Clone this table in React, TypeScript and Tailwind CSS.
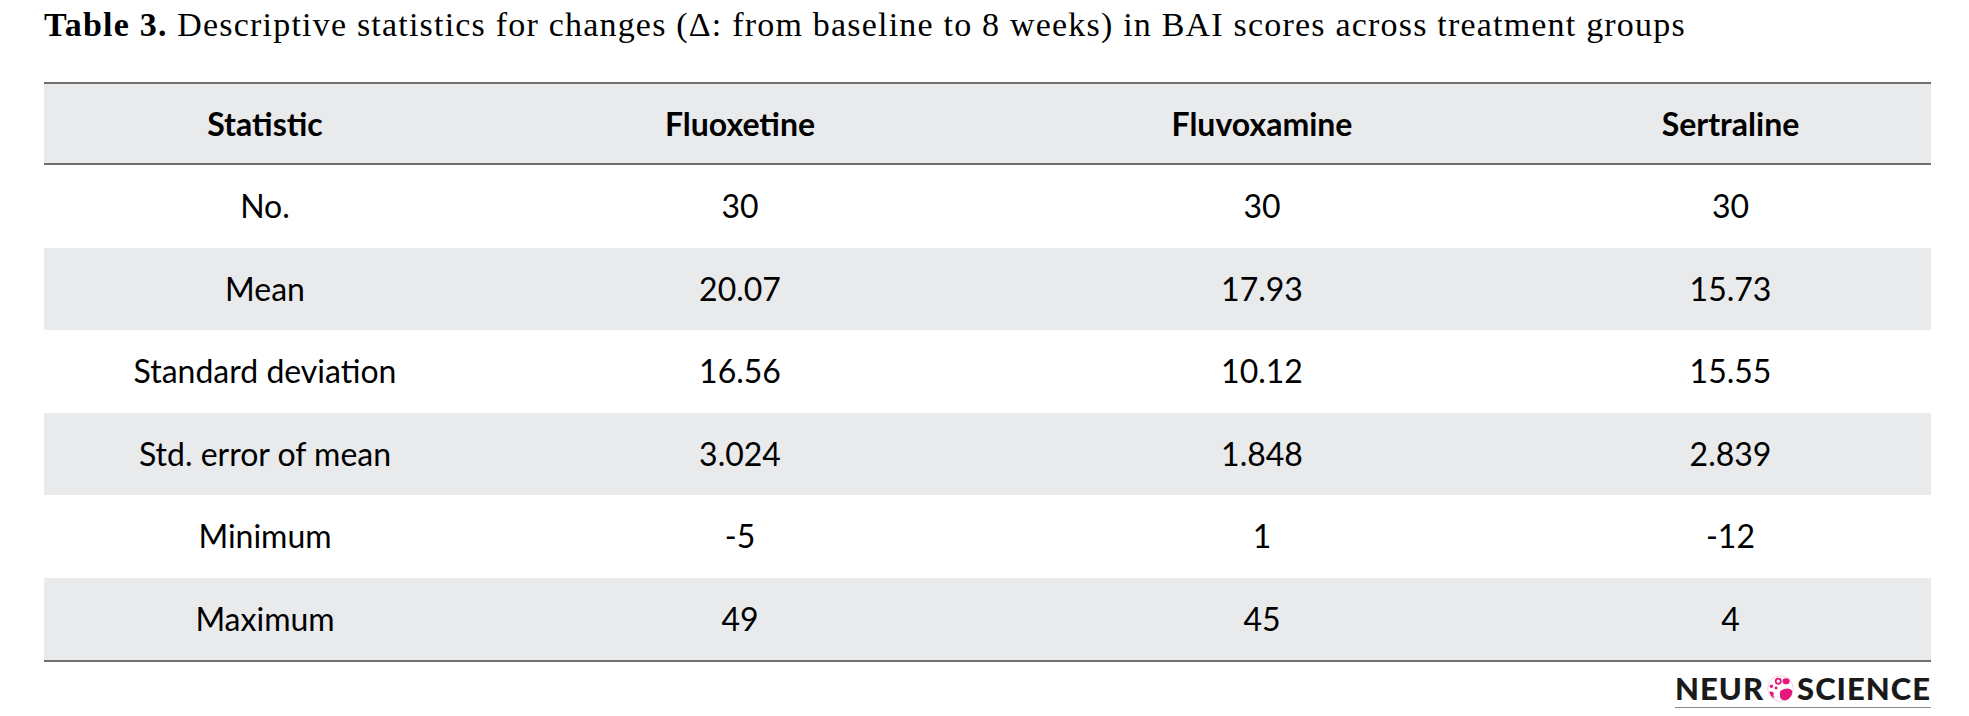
import React from "react";

const rows = [
  ["No.", "30", "30", "30"],
  ["Mean", "20.07", "17.93", "15.73"],
  ["Standard deviation", "16.56", "10.12", "15.55"],
  ["Std. error of mean", "3.024", "1.848", "2.839"],
  ["Minimum", "-5", "1", "-12"],
  ["Maximum", "49", "45", "4"],
];

function BrainIcon() {
  return (
    <svg width="29" height="29" viewBox="0 0 26 26" className="mx-[2px]">
      <circle cx="13" cy="13" r="11.5" fill="none" stroke="#f4c6dc" strokeWidth="0.8" />
      <circle cx="11" cy="6.5" r="2.3" fill="none" stroke="#e5177b" strokeWidth="1.6" />
      <ellipse cx="18" cy="6.5" rx="3.2" ry="2.8" fill="#e5177b" />
      <circle cx="4.8" cy="11" r="1.5" fill="#e5177b" />
      <circle cx="9" cy="12.5" r="1.3" fill="#e5177b" />
      <path d="M13 15 Q20 11 23.5 15 Q24 21 18 23.5 Q13 24 12.5 20 Q12 17 13 15 Z" fill="#e5177b" />
      <path d="M3 16 Q5 15 7 17 Q6 20 8 22 Q4 21 3 16 Z" fill="#e5177b" />
    </svg>
  );
}

export default function App() {
  return (
    <div className="w-[1969px] h-[716px] bg-white relative overflow-hidden">
      <div
        className="pl-[44px] pt-[5px] h-[82px] text-[34px] leading-[40px] tracking-[1.2px] text-black whitespace-nowrap"
        style={{ fontFamily: '"Liberation Serif", serif' }}
      >
        <span className="font-bold">Table 3.</span> Descriptive statistics for changes (Δ: from baseline to 8 weeks) in BAI scores across treatment groups
      </div>
      <div className="ml-[44px] w-[1887px] border-t-2 border-b-2 border-[#6f6f6f] text-black" style={{ fontFamily: "Lato, sans-serif" }}>
        <div className="grid grid-cols-[442px_508px_536px_401px] h-[81px] bg-[#e9eaec] border-b-2 border-[#6f6f6f] items-center text-center text-[32px] font-bold">
          <div>Statistic</div>
          <div>Fluoxetine</div>
          <div>Fluvoxamine</div>
          <div>Sertraline</div>
        </div>
        {rows.map((r, i) => (
          <div
            key={i}
            className={`grid grid-cols-[442px_508px_536px_401px] h-[82.5px] items-center text-center text-[32px] ${i % 2 === 1 ? "bg-[#e9eaec]" : "bg-white"}`}
          >
            {r.map((c, j) => (
              <div key={j}>{c}</div>
            ))}
          </div>
        ))}
      </div>
      <div className="flex justify-end pr-[38px] pt-[11px]">
        <div className="flex flex-col items-end">
          <div
            className="flex items-center text-[31px] leading-[31px] font-black text-[#1a1a1a] tracking-[1px]"
            style={{ fontFamily: "Lato, sans-serif" }}
          >
            <span>NEUR</span>
            <BrainIcon />
            <span>SCIENCE</span>
          </div>
          <div className="w-full h-[1px] bg-[#888] mt-[3px]" />
        </div>
      </div>
    </div>
  );
}
